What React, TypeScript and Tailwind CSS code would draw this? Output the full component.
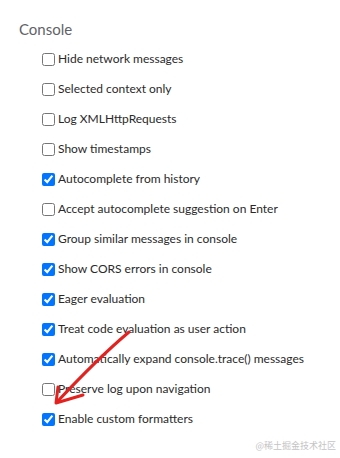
const OPTIONS: { label: string; checked: boolean }[] = [
  { label: 'Hide network messages', checked: false },
  { label: 'Selected context only', checked: false },
  { label: 'Log XMLHttpRequests', checked: false },
  { label: 'Show timestamps', checked: false },
  { label: 'Autocomplete from history', checked: true },
  { label: 'Accept autocomplete suggestion on Enter', checked: false },
  { label: 'Group similar messages in console', checked: true },
  { label: 'Show CORS errors in console', checked: true },
  { label: 'Eager evaluation', checked: true },
  { label: 'Treat code evaluation as user action', checked: true },
  { label: 'Automatically expand console.trace() messages', checked: true },
  { label: 'Preserve log upon navigation', checked: false },
  { label: 'Enable custom formatters', checked: true },
]

function Arrow() {
  return (
    <svg className="absolute inset-0 pointer-events-none" width="340" height="458" viewBox="0 0 340 458">
      <g fill="none" stroke="#e3221f" strokeWidth="3" strokeLinecap="round" strokeLinejoin="round">
        <path d="M129 332 C 110 348, 85 372, 57 402" />
        <path d="M58 387 L 56 403 L 83 395" />
      </g>
    </svg>
  )
}

export default function App() {
  return (
    <div className="relative w-[340px] h-[458px] bg-white overflow-hidden font-['Lato',sans-serif]">
      <div className="pl-[19px] pt-[19px] text-[15px] leading-[20px] text-[#5f6368]">Console</div>
      <ul className="mt-[5px] pl-[42px]">
        {OPTIONS.map((o) => (
          <li key={o.label} className="h-[30px] flex items-center gap-[3px]">
            <input
              type="checkbox"
              readOnly
              checked={o.checked}
              className="m-0 w-[13px] h-[13px] shrink-0"
            />
            <span className="text-[12px] leading-none text-[#2a2a2a] whitespace-nowrap">{o.label}</span>
          </li>
        ))}
      </ul>
      <div className="absolute right-[4px] bottom-[6px] text-[9px] text-[#c4c4c4] font-['Noto_Sans_CJK_SC',sans-serif]">
        @稀土掘金技术社区
      </div>
      <Arrow />
    </div>
  )
}
